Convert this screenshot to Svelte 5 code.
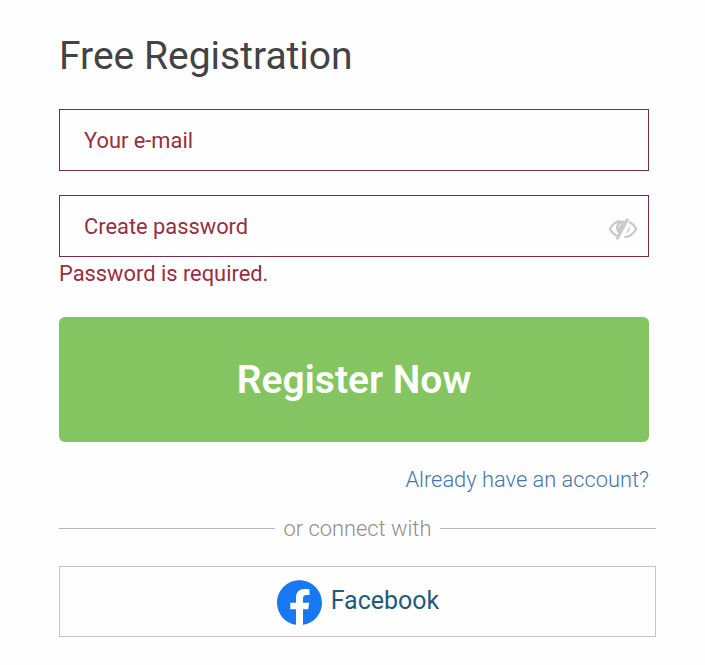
<script lang="ts">
  let email = $state("");
  let password = $state("");
  let visible = $state(false);
</script>

<main class="registration">
  <h1>Free Registration</h1>

  <form novalidate onsubmit={(e) => e.preventDefault()}>
    <input class="field" type="email" placeholder="Your e-mail" aria-label="Your e-mail" bind:value={email} />

    <div class="password">
      <input
        class="field"
        type={visible ? "text" : "password"}
        placeholder="Create password"
        aria-label="Create password"
        bind:value={password}
      />
      <button class="toggle" type="button" aria-label="Show password" onclick={() => (visible = !visible)}>
        <svg viewBox="0 0 30 22" width="30" height="22">
          <path
            d="M12.5 2.9C7.5 3.8 3.9 7 1.9 11c1.5 3 4 5.5 7.1 7"
            fill="none"
            stroke="currentColor"
            stroke-width="2.2"
          />
          <path
            d="M21.2 4.1c3.1 1.5 5.4 4 6.9 6.9-2.5 4.7-6.7 7.7-11.8 8.2"
            fill="none"
            stroke="currentColor"
            stroke-width="2.2"
          />
          <path d="M16.8 2.4C11.3 2.4 8 5.4 8 9.5c0 2.7 1.2 5 3.2 6.6l6.5-11.4z" fill="currentColor" />
          <path d="M21.6 8.3c.6 3.4-.8 6.1-3.8 7.3z" fill="currentColor" />
          <path d="M19.9.8 8.8 21.3" fill="none" stroke="currentColor" stroke-width="3" />
          <path d="M10.8 9.4c.2-1.8 1.1-2.9 2.7-3.2" fill="none" stroke="#fff" stroke-width="0.8" />
        </svg>
      </button>
    </div>
    <p class="error">Password is required.</p>

    <button class="submit" type="submit">Register Now</button>
  </form>

  <a class="login" href="#login">Already have an account?</a>

  <div class="divider"><span>or connect with</span></div>

  <button class="facebook" type="button">
    <svg viewBox="0 0 24 24" width="45" height="45" aria-hidden="true">
      <path
        fill="#1877f2"
        d="M24 12.073c0-6.627-5.373-12-12-12s-12 5.373-12 12c0 5.99 4.388 10.954 10.125 11.854v-8.385H7.078v-3.47h3.047V9.43c0-3.007 1.792-4.669 4.533-4.669 1.312 0 2.686.235 2.686.235v2.953H15.83c-1.491 0-1.956.925-1.956 1.874v2.25h3.328l-.532 3.47h-2.796v8.385C19.612 23.027 24 18.062 24 12.073z"
      />
    </svg>
    <span>Facebook</span>
  </button>
</main>

<style>
  :global(body) {
    background: #fefefe;
  }
  .registration {
    box-sizing: border-box;
    width: 705px;
    height: 665px;
    padding: 33px 49px 0 59px;
    display: flex;
    flex-direction: column;
    font-family: Roboto, "Liberation Sans", sans-serif;
    font-size: 21.85px;
  }
  h1 {
    margin: 0 0 30px;
    font-size: 39px;
    font-weight: 400;
    line-height: 46px;
    color: #414345;
  }
  form {
    width: 590px;
    display: flex;
    flex-direction: column;
  }
  button {
    font-family: inherit;
    cursor: pointer;
  }
  .field {
    box-sizing: border-box;
    display: block;
    width: 100%;
    height: 62px;
    padding: 0 24px;
    border: 1px solid #7d2d42;
    border-radius: 0;
    outline: none;
    background: #fefefe;
    font: inherit;
    color: #962f40;
  }
  .field::placeholder {
    color: #962f40;
    opacity: 1;
  }
  .password {
    position: relative;
    margin-top: 24px;
  }
  .toggle {
    position: absolute;
    right: 11px;
    top: 23px;
    display: flex;
    padding: 0;
    border: 0;
    background: none;
    color: #cacaca;
  }
  .error {
    margin: 3px 0 30px;
    line-height: 27px;
    color: #962f40;
  }
  .submit {
    height: 125px;
    padding: 0;
    border: 0;
    border-radius: 6px;
    background: #84c561;
    font-size: 39px;
    font-weight: 600;
    color: #fff;
  }
  .login {
    align-self: flex-end;
    margin: 24px 7px 0 0;
    line-height: 28px;
    font-weight: 300;
    color: #4676a8;
    text-decoration: none;
  }
  .divider {
    display: flex;
    align-items: center;
    gap: 9px;
    height: 28px;
    margin-top: 20px;
    font-weight: 300;
    color: #8f8f8f;
  }
  .divider::before,
  .divider::after {
    content: "";
    flex: 1;
    height: 1px;
    background: #b5b5b5;
  }
  .facebook {
    display: flex;
    align-items: center;
    justify-content: center;
    gap: 9px;
    height: 71px;
    margin-top: 24px;
    padding: 2px 0 0 1px;
    border: 1px solid #c6c6c6;
    background: #fefefe;
    font-size: 25px;
    color: #1f5a7d;
  }
  .facebook span {
    margin-top: -4px;
  }
</style>
